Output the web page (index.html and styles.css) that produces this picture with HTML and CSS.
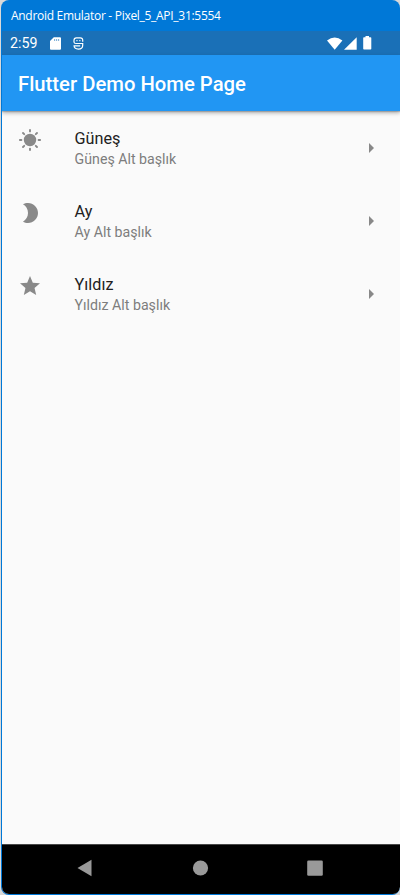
FILE: index.html
```html
<!DOCTYPE html>
<html lang="tr">
<head>
<meta charset="utf-8">
<title>Flutter Demo Home Page</title>
<link rel="stylesheet" href="styles.css">
</head>
<body>
<div class="window">
  <div class="titlebar"><span>Android Emulator - Pixel_5_API_31:5554</span></div>
  <div class="screen">
    <div class="status">
      <span class="clock">2:59</span>
      <svg class="sd" viewBox="0 0 11 13"><path fill-rule="evenodd" d="M3.8.3H10q1 0 1 1v10.4q0 1-1 1H1q-1 0-1-1V4.1ZM4.300 2.200v1.500h.8v-1.500Zm2 0v1.500h.8v-1.500Zm2 0v1.500h.8v-1.500Z"/></svg>
      <svg class="debug" viewBox="0 0 11 13"><path d="M9.700 4.800V3.300Q9.700.9 7.300.9H3.400Q1 .9 1 3.300v1.700Q1 6.500 3 6.500H9.700V8.300Q9.700 12.100 5.400 12.100T1 8.300M3.400 3.700h1.100M6.300 3.700h1.100M1 8.900h6.200"/></svg>
      <span class="spacer"></span>
      <svg class="wifi" viewBox="0 0 16 13"><path d="M0 3.500Q7.700-2.700 15.400 3.500L7.700 12.800Z"/></svg>
      <svg class="signal" viewBox="0 0 13 13"><path d="M12.700.2v12.500H0Z"/></svg>
      <svg class="battery" viewBox="0 0 9 14"><path d="M2.500 0h3.500v1.300h1.500q.8 0 .8.800v10.600q0 .8-.8.800H1q-.8 0-.8-.8V2.100q0-.8.8-.8h1.500Z"/></svg>
    </div>
    <header class="appbar"><h1>Flutter Demo Home Page</h1></header>
    <main class="list">
      <div class="tile">
        <svg class="lead" viewBox="0 0 24 24"><circle cx="12" cy="12" r="6.200"/><path class="rays" d="M12 1.900v1.500M12 20.600v1.500M1.900 12h1.500M20.600 12h1.500M5 5l1.200 1.200M17.800 17.800l1.200 1.200M5 19l1.200-1.200M17.800 6.200l1.200-1.200"/></svg>
        <div class="text"><div class="name">Güneş</div><div class="sub">Güneş Alt başlık</div></div>
        <svg class="arrow" viewBox="0 0 24 24"><path d="M10 17l5-5-5-5z"/></svg>
      </div>
      <div class="tile">
        <svg class="lead" viewBox="0 0 24 24"><path d="M10 2c-1.820 0-3.530.5-5 1.350C7.990 5.080 10 8.300 10 12s-2.010 6.920-5 8.650C6.470 21.500 8.180 22 10 22c5.520 0 10-4.480 10-10S15.520 2 10 2z"/></svg>
        <div class="text"><div class="name">Ay</div><div class="sub">Ay Alt başlık</div></div>
        <svg class="arrow" viewBox="0 0 24 24"><path d="M10 17l5-5-5-5z"/></svg>
      </div>
      <div class="tile">
        <svg class="lead" viewBox="0 0 24 24"><path d="M12 17.270 18.180 21l-1.640-7.030L22 9.240l-7.190-.61L12 2 9.190 8.630 2 9.240l5.460 4.730L5.820 21z"/></svg>
        <div class="text"><div class="name">Yıldız</div><div class="sub">Yıldız Alt başlık</div></div>
        <svg class="arrow" viewBox="0 0 24 24"><path d="M10 17l5-5-5-5z"/></svg>
      </div>
    </main>
    <nav class="navbar">
      <svg viewBox="0 0 18 18"><path d="M1.500 9 15.500.7v16.600Z"/></svg>
      <svg viewBox="0 0 18 18"><circle cx="9.500" cy="9" r="7.600"/></svg>
      <svg viewBox="0 0 18 18"><rect x="1.200" y="1.400" width="15.600" height="15.400" rx="1.300"/></svg>
    </nav>
  </div>
</div>
</body>
</html>
```
FILE: styles.css
```css
* { box-sizing: border-box; }
body {
  margin: 0;
  background: #d9d9d9;
  font-family: Roboto, sans-serif;
}
.window {
  height: 895px;
  margin-left: 1px;
  display: flex;
  flex-direction: column;
  overflow: hidden;
  background: #0078d7;
  border-radius: 8px;
  padding: 0 0 1px 1px;
}
.titlebar {
  height: 31px;
  flex: none;
  padding-left: 9px;
  color: #fff;
  font: 12px/31px "Open Sans", sans-serif;
  white-space: nowrap;
  letter-spacing: -0.290px;
}
.screen {
  flex: 1;
  display: flex;
  flex-direction: column;
  background: #fafafa;
  overflow: hidden;
  border-radius: 0 0 7px 7px;
}
.status {
  height: 24px;
  flex: none;
  display: flex;
  align-items: center;
  padding: 0 28px 0 8px;
  background: #1a70b7;
  color: #fff;
}
.status svg { fill: #fff; flex: none; }
.clock { width: 40px; font-size: 14.200px; line-height: 24px; }
.sd { width: 11px; height: 13px; }
.status .debug { width: 11px; height: 13px; margin-left: 12px; fill: none; stroke: #fff; stroke-width: 1.200; }
.spacer { flex: 1; }
.wifi { width: 16px; height: 13px; }
.signal { width: 13px; height: 13px; margin-left: 1px; }
.battery { width: 9px; height: 14px; margin-left: 6px; }
.appbar {
  height: 56px;
  flex: none;
  padding-left: 16px;
  background: #2196f3;
  color: #fff;
  position: relative;
  box-shadow: 0 2px 4px rgba(0, 0, 0, .3), 0 1px 1px rgba(0, 0, 0, .16);
}
h1 { margin: 0; font-size: 20.280px; line-height: 58px; font-weight: 500; white-space: nowrap; }
.list { flex: 1; }
.tile { height: 73px; display: flex; padding: 0 17px 0 16px; }
.lead { width: 24px; height: 24px; margin-top: 17px; fill: #898989; }
.rays { stroke: #898989; stroke-width: 1.900; stroke-linecap: round; }
.text { flex: 1; margin: 17px 0 0 32.600px; }
.name { font-size: 16.200px; line-height: 21px; color: #212121; }
.sub { font-size: 14.180px; line-height: 21px; color: #7d7d7d; }
.arrow { width: 24px; height: 24px; margin-top: 25px; fill: #888; }
.navbar {
  height: 50px;
  flex: none;
  display: flex;
  align-items: center;
  justify-content: space-between;
  padding: 0 76px 3px 74px;
  border-top: 1px solid #484848;
  background: #000;
}
.navbar svg { width: 18px; height: 18px; fill: #999; }
```
